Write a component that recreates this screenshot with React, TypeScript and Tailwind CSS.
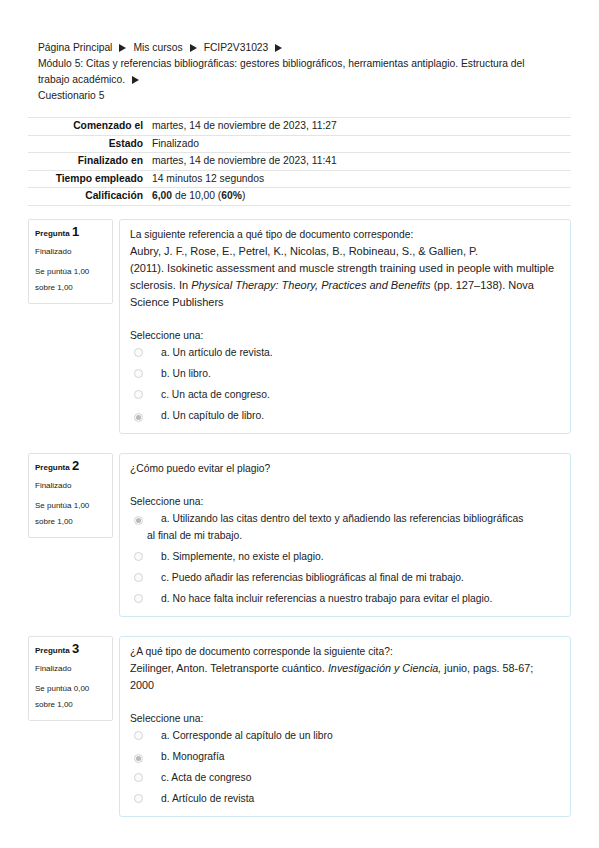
import React from 'react';

type Opt = { text: React.ReactNode; checked?: boolean };

interface Question {
  num: number;
  grade: string;
  text: React.ReactNode;
  options: Opt[];
}

function Arrow() {
  return (
    <svg className="inline-block mx-[7px] align-[-1px]" width="7" height="8" viewBox="0 0 7 8">
      <path d="M0 0 L7 4 L0 8 Z" fill="#222" />
    </svg>
  );
}

function Radio({ checked }: { checked?: boolean }) {
  return (
    <span className="inline-flex items-center justify-center w-[9px] h-[9px] rounded-full border border-[#d4d4d4] bg-[#fbfbfb] align-[-1px] indent-0">
      {checked && <span className="w-[5px] h-[5px] rounded-full bg-[#b9b9b9]" />}
    </span>
  );
}

const questions: Question[] = [
  {
    num: 1,
    grade: '1,00',
    text: (
      <>
        <p>La siguiente referencia a qué tipo de documento corresponde:</p>
        <p className="text-[11px]">
          Aubry, J. F., Rose, E., Petrel, K., Nicolas, B., Robineau, S., &amp; Gallien, P.
          <br />
          (2011). Isokinetic assessment and muscle strength training used in people with multiple
          <br />
          sclerosis. In <i>Physical Therapy: Theory, Practices and Benefits</i> (pp. 127–138). Nova
          <br />
          Science Publishers
        </p>
      </>
    ),
    options: [
      { text: 'a. Un artículo de revista.' },
      { text: 'b. Un libro.' },
      { text: 'c. Un acta de congreso.' },
      { text: 'd. Un capítulo de libro.', checked: true },
    ],
  },
  {
    num: 2,
    grade: '1,00',
    text: <p>¿Cómo puedo evitar el plagio?</p>,
    options: [
      {
        text: (
          <>
            a. Utilizando las citas dentro del texto y añadiendo las referencias bibliográficas
            <br />
            al final de mi trabajo.
          </>
        ),
        checked: true,
      },
      { text: 'b. Simplemente, no existe el plagio.' },
      { text: 'c. Puedo añadir las referencias bibliográficas al final de mi trabajo.' },
      { text: 'd. No hace falta incluir referencias a nuestro trabajo para evitar el plagio.' },
    ],
  },
  {
    num: 3,
    grade: '0,00',
    text: (
      <>
        <p>¿A qué tipo de documento corresponde la siguiente cita?:</p>
        <p className="text-[10.8px]">
          Zeilinger, Anton. Teletransporte cuántico. <i>Investigación y Ciencia,</i> junio, pags. 58-67;
          <br />
          2000
        </p>
      </>
    ),
    options: [
      { text: 'a. Corresponde al capítulo de un libro' },
      { text: 'b. Monografía', checked: true },
      { text: 'c. Acta de congreso' },
      { text: 'd. Artículo de revista' },
    ],
  },
];

const summary: { label: string; value: React.ReactNode }[] = [
  { label: 'Comenzado el', value: 'martes, 14 de noviembre de 2023, 11:27' },
  { label: 'Estado', value: 'Finalizado' },
  { label: 'Finalizado en', value: 'martes, 14 de noviembre de 2023, 11:41' },
  { label: 'Tiempo empleado', value: '14 minutos 12 segundos' },
  {
    label: 'Calificación',
    value: (
      <>
        <b>6,00</b> de 10,00 (<b>60%</b>)
      </>
    ),
  },
];

export default function App() {
  return (
    <div className="min-h-screen bg-white text-[#222] text-[10.3px] font-['Liberation_Sans',Arial,Helvetica,sans-serif] px-[28px] pt-[40px] pb-[28px]">
      {/* Breadcrumb */}
      <nav className="pl-[10px] leading-[16px]">
        <div>
          Página Principal<Arrow />Mis cursos<Arrow />FCIP2V31023<Arrow />
        </div>
        <div>
          Módulo 5: Citas y referencias bibliográficas: gestores bibliográficos, herramientas antiplagio. Estructura del
          <br />
          trabajo académico.<Arrow />
        </div>
        <div>Cuestionario 5</div>
      </nav>

      {/* Summary */}
      <table className="w-full mt-[13px] border-collapse">
        <tbody>
          {summary.map(r => (
            <tr key={r.label} className="border-t border-b border-[#e4e4e4]">
              <th className="w-[121px] h-[16.5px] leading-[16.5px] text-right pr-[6px] font-bold text-[#111]">{r.label}</th>
              <td className="pl-[3px] leading-[16.5px]">{r.value}</td>
            </tr>
          ))}
        </tbody>
      </table>

      {/* Questions */}
      <div className="mt-[13px] flex flex-col gap-[19px]">
        {questions.map(q => (
          <div key={q.num} className="flex items-start gap-[6px]">
            <div className="w-[85px] shrink-0 border border-[#e2e2e2] rounded-[2px] bg-white px-[6px] pt-[4px] pb-[7px] text-[8px]">
              <h3 className="leading-[16px] font-bold text-[#111]">
                Pregunta <span className="text-[13px]">{q.num}</span>
              </h3>
              <div className="mt-[4px] leading-[12px]">Finalizado</div>
              <div className="mt-[6px] leading-[16px]">
                Se puntúa {q.grade}
                <br />
                sobre 1,00
              </div>
            </div>
            <div className="flex-1 border border-[#cfe9f2] rounded-[3px] bg-white px-[10px] pt-[6px] pb-[5px] leading-[17px]">
              <div>{q.text}</div>
              <div className="mt-[16px]">Seleccione una:</div>
              <div>
                {q.options.map((o, i) => (
                  <div key={i} className="pl-[17px] -indent-[13px] pb-[4px]">
                    <Radio checked={o.checked} />
                    <span className="ml-[18px]">{o.text}</span>
                  </div>
                ))}
              </div>
            </div>
          </div>
        ))}
      </div>
    </div>
  );
}
